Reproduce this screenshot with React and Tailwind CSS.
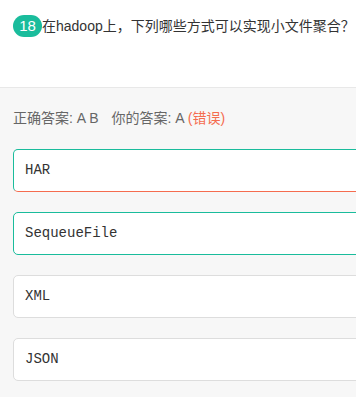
export default function App() {
  const options = [
    { label: "HAR", state: "mixed" },
    { label: "SequeueFile", state: "correct" },
    { label: "XML", state: "normal" },
    { label: "JSON", state: "normal" },
  ];

  const boxClass = {
    mixed: "border-[#1abc9c] border-b-[#f56c4f]",
    correct: "border-[#1abc9c]",
    normal: "border-[#dddddd]",
  };

  return (
    <div
      className="w-[356px] h-[397px] overflow-hidden bg-[#f7f7f7]"
      style={{ fontFamily: '"Liberation Sans", "Noto Sans CJK SC", sans-serif' }}
    >
      <div className="h-[88px] bg-white border-b border-[#e8e8e8] px-[13px] pt-[15px]">
        <div className="flex items-center">
          <span className="flex h-[22px] w-[29px] shrink-0 items-center justify-center rounded-full bg-[#1abc9c] text-[15px] text-white">
            18
          </span>
          <span className="whitespace-nowrap text-[14px] leading-[22px] text-[#333333]">
            在hadoop上，下列哪些方式可以实现小文件聚合？
          </span>
        </div>
      </div>

      <div className="px-[13px] pt-[20px]">
        <p className="whitespace-nowrap text-[14px] leading-[20px] text-[#666666]">
          正确答案: A B<span className="inline-block w-[13px]" />你的答案: A{" "}
          <span className="text-[#f56c4f]">(错误)</span>
        </p>

        <div className="mt-[21px] flex flex-col gap-[20px]">
          {options.map((o) => (
            <div
              key={o.label}
              className={`flex h-[43px] w-[380px] items-center rounded-[5px] border bg-white pl-[11px] ${boxClass[o.state]}`}
            >
              <span
                className="text-[14px] text-[#333333]"
                style={{ fontFamily: '"Liberation Mono", monospace' }}
              >
                {o.label}
              </span>
            </div>
          ))}
        </div>
      </div>
    </div>
  );
}
